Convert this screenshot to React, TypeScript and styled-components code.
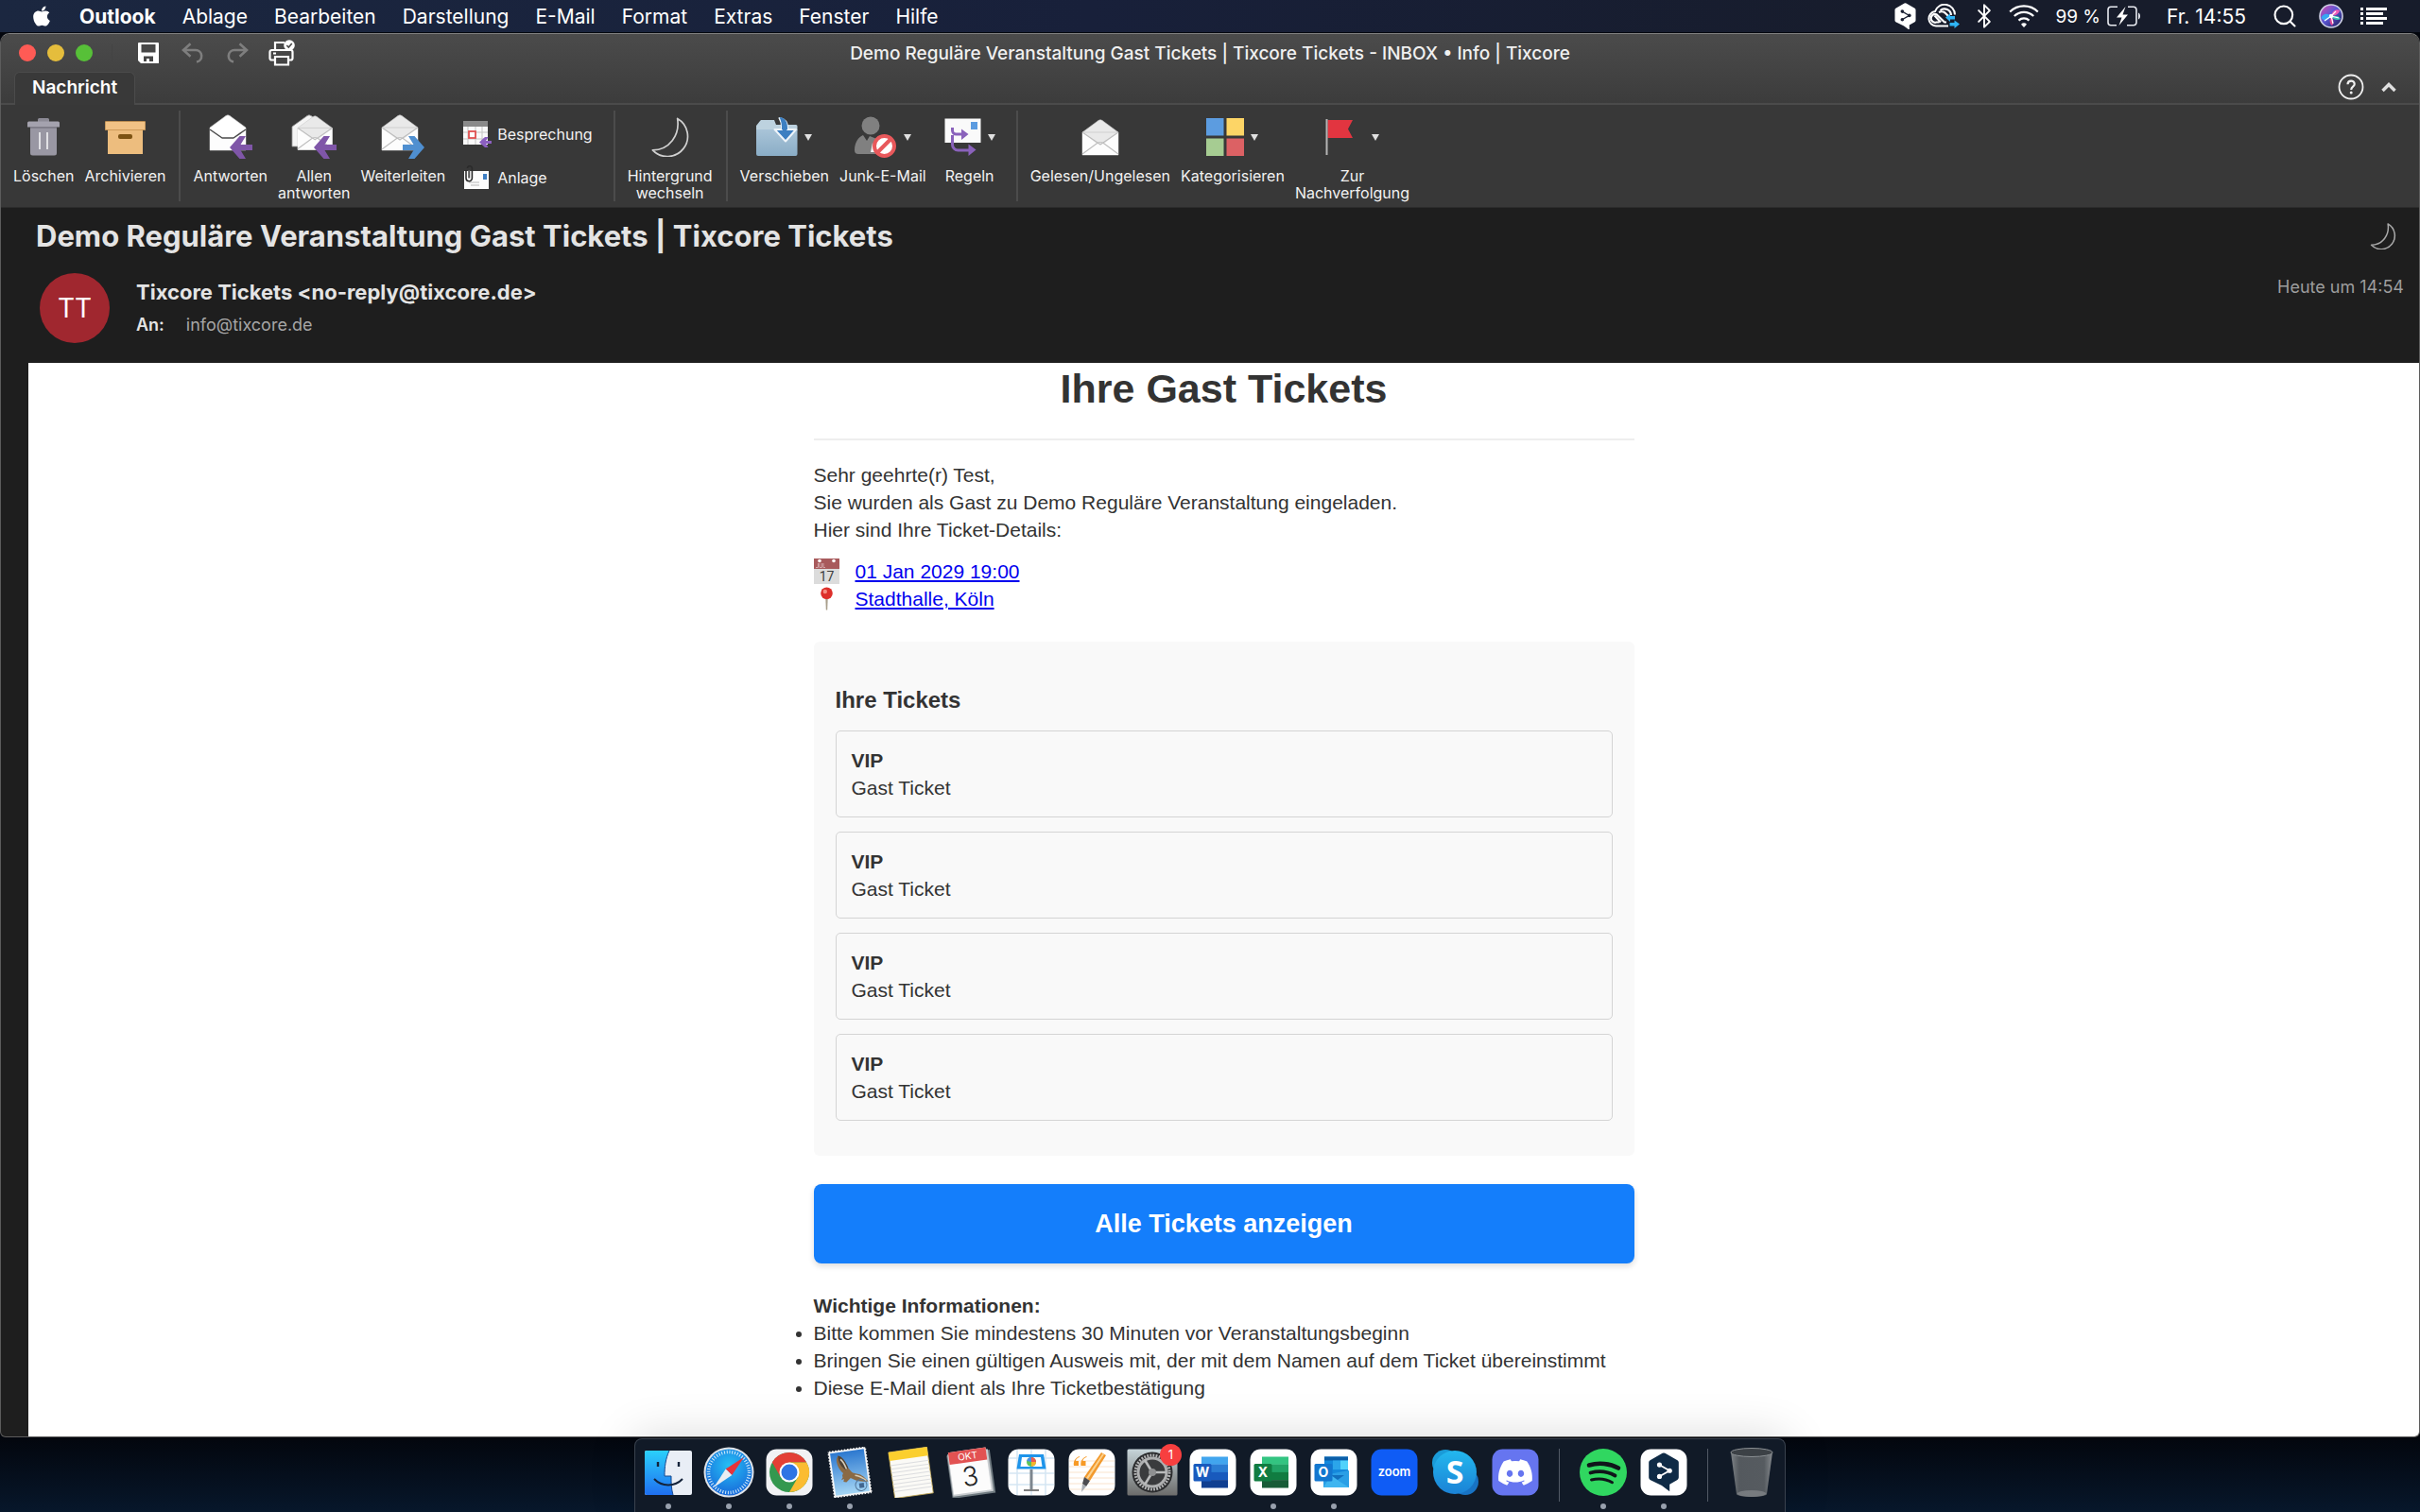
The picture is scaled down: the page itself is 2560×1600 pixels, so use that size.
import React from "react";
import styled, { createGlobalStyle, css } from "styled-components";
import { FaApple, FaDiscord } from "react-icons/fa";
import { Bluetooth, Search } from "lucide-react";

const ui = `Inter, "Liberation Sans", sans-serif`;
const mail = `"Liberation Sans", Arial, sans-serif`;

const GlobalStyle = createGlobalStyle`
  *, *::before, *::after { box-sizing: border-box; }
  body { margin: 0; background: #050d1b; font-family: ${ui}; }
  h1, h2, h3, p, ul { margin: 0; padding: 0; }
  svg { display: block; flex: none; }
`;

const plainButton = css`
  border: 0;
  padding: 0;
  background: none;
  color: inherit;
  font: inherit;
  cursor: default;
`;

const Desktop = styled.div`
  display: flex;
  flex-direction: column;
  height: 100vh;
  overflow: hidden;
  background: linear-gradient(#03060d 95%, #07172b 100%);
`;

/* ---------- Menu bar ---------- */

const MenuBar = styled.header`
  display: flex;
  align-items: center;
  justify-content: space-between;
  flex: none;
  height: 35px;
  padding: 0 35px 0 32px;
  border-bottom: 1px solid #05080f;
  background: linear-gradient(90deg, #1b2740, #18203a 45%, #171c2b 80%);
  color: #fff;
  font-size: 21px;
`;

const MenuList = styled.nav`
  display: flex;
  align-items: center;
  gap: 28px;
`;

const MenuItem = styled.button<{ $strong?: boolean }>`
  ${plainButton}
  font-weight: ${(p) => (p.$strong ? 700 : 400)};
`;

const StatusList = styled.div<{ $gap: number }>`
  display: flex;
  align-items: center;
  gap: ${(p) => p.$gap}px;
`;

const BatteryText = styled.span`
  font-size: 19px;
`;

/* ---------- Window ---------- */

const Window = styled.main`
  display: flex;
  flex-direction: column;
  flex: 1;
  min-height: 0;
  border: 1px solid #5c5c5c;
  border-top-color: #808080;
  border-radius: 10px 10px 6px 6px;
  overflow: hidden;
  background: #1e1e1e;
`;

const TitleArea = styled.div`
  flex: none;
  background: linear-gradient(#4b4b4b, #3c3c3c);
  border-bottom: 2px solid #4b4b4b;
`;

const TitleRow = styled.div`
  display: grid;
  grid-template-columns: 1fr auto 1fr;
  align-items: center;
  height: 40px;
  padding: 0 19px;
`;

const QuickAccess = styled.div`
  display: flex;
  align-items: center;
  gap: 19px;
`;

const Lights = styled.div`
  display: flex;
  gap: 12px;
  padding-right: 20px;
  border-right: 1px solid #434343;
  margin-right: 5px;
`;

const Light = styled.button<{ $color: string }>`
  ${plainButton}
  width: 18px;
  height: 18px;
  border-radius: 50%;
  background: ${(p) => p.$color};
`;

const ToolButton = styled.button`
  ${plainButton}
  display: flex;
  justify-content: center;
  width: 28px;
`;

const WindowTitle = styled.h1`
  color: #f0f0f0;
  font-size: 19px;
  font-weight: 500;
`;

const TabRow = styled.div`
  display: flex;
  justify-content: space-between;
  align-items: flex-end;
  height: 33px;
  padding: 0 24px 0 14px;
`;

const Tab = styled.button`
  ${plainButton}
  height: 35px;
  margin-bottom: -2px;
  padding: 0 18px 3px;
  border: 1px solid #4b4b4b;
  border-bottom: 0;
  border-radius: 6px 6px 0 0;
  background: #393939;
  color: #fff;
  font-size: 19px;
  font-weight: 600;
`;

const TabTools = styled.div`
  display: flex;
  align-items: center;
  gap: 18px;
  height: 34px;
`;

const IconButton = styled.button`
  ${plainButton}
  display: flex;
`;

/* ---------- Ribbon ---------- */

const Ribbon = styled.div`
  display: flex;
  flex: none;
  padding: 6px 0;
  border-bottom: 1px solid #2c2c2c;
  background: #383838;
  color: #f2f2f2;
  font-size: 16px;
  line-height: 18px;
`;

const Group = styled.div`
  display: flex;
  gap: 11px;
  height: 96px;
  padding: 0 14px 0 13px;
  border-right: 2px solid #4c4c4c;

  &:last-child {
    border-right: 0;
  }
`;

const RibbonButton = styled.button<{ $menu?: boolean }>`
  ${plainButton}
  display: flex;
  flex-direction: column;
  align-items: center;
  justify-content: flex-start;
  min-width: ${(p) => (p.$menu ? 70 : 64)}px;
`;

const RibbonIcon = styled.span`
  display: flex;
  align-items: center;
  gap: 7px;
  height: 56px;
  margin-bottom: 4px;
`;

const RibbonLabel = styled.span`
  white-space: pre-line;
  text-align: center;
`;

const SmallStack = styled.div`
  display: flex;
  flex-direction: column;
  padding: 2px 8px 0;
`;

const SmallButton = styled.button`
  ${plainButton}
  display: flex;
  align-items: center;
  gap: 6px;
  height: 46px;
`;

/* ---------- Message header ---------- */

const MessageHeader = styled.header`
  flex: none;
  padding: 10px 16px 21px 37px;
  color: #e4e4e4;
`;

const SubjectRow = styled.div`
  display: flex;
  justify-content: space-between;
  align-items: center;
  padding-right: 8px;
`;

const Subject = styled.h2`
  font-size: 31px;
  line-height: 40px;
  font-weight: 700;
`;

const SenderRow = styled.div`
  display: flex;
  gap: 28px;
  margin-top: 19px;
  padding-left: 4px;
`;

const Avatar = styled.div`
  display: flex;
  align-items: center;
  justify-content: center;
  width: 74px;
  height: 74px;
  border-radius: 50%;
  background: #a0272f;
  color: #fff;
  font-size: 28px;
`;

const SenderText = styled.div`
  display: flex;
  flex-direction: column;
  gap: 8px;
  flex: 1;
  padding-top: 5px;
`;

const Sender = styled.p`
  font-size: 22px;
  line-height: 30px;
  font-weight: 700;
`;

const Recipient = styled.p`
  display: flex;
  gap: 23px;
  color: #a6a6a6;
  font-size: 18px;
  line-height: 24px;

  strong {
    color: #e4e4e4;
    font-weight: 600;
  }
`;

const Received = styled.time`
  padding-top: 3px;
  color: #9d9d9d;
  font-size: 18px;
  line-height: 24px;
`;

/* ---------- Mail body ---------- */

const MailPane = styled.section`
  flex: 1;
  min-height: 0;
  overflow: hidden;
  margin-left: 29px;
  background: #fff;
  color: #333;
  font-family: ${mail};
  font-size: 21px;
  line-height: 29px;
`;

const MailContent = styled.article`
  display: flex;
  flex-direction: column;
  max-width: 868px;
  margin: 0 auto;
`;

const MailTitle = styled.h2`
  padding: 2px 0 28px;
  border-bottom: 2px solid #eee;
  font-size: 43px;
  line-height: 50px;
  text-align: center;
`;

const Intro = styled.p`
  margin-top: 22px;
`;

const Details = styled.div`
  margin: 15px 0 31px;
`;

const Detail = styled.div`
  display: flex;
  align-items: center;
  gap: 17px;

  a {
    color: #0000ee;
  }
`;

const TicketBox = styled.section`
  display: flex;
  flex-direction: column;
  gap: 15px;
  padding: 45px 23px 37px;
  border-radius: 6px;
  background: #f9f9f9;
`;

const TicketHeading = styled.h3`
  font-size: 24px;
  line-height: 34px;
`;

const Ticket = styled.div`
  padding: 16px;
  border: 1px solid #d4d4d4;
  border-radius: 5px;
`;

const ShowAll = styled.a`
  display: flex;
  align-items: center;
  justify-content: center;
  height: 84px;
  margin: 30px 0;
  border-radius: 8px;
  background: #147efb;
  box-shadow: 0 3px 6px rgba(0, 0, 0, 0.14);
  color: #fff;
  font-size: 27px;
  font-weight: 700;
  text-decoration: none;
`;

const Notes = styled.ul`
  list-style: disc;
`;

/* ---------- Dock ---------- */

const Dock = styled.footer`
  position: relative;
  z-index: 1;
  display: flex;
  align-self: center;
  flex: none;
  height: 78px;
  margin-top: 1px;
  padding: 0 3px;
  border: 1px solid #39414d;
  border-bottom: 0;
  border-radius: 8px 8px 0 0;
  background: #111a27;
  box-shadow: 0 0 50px rgba(0, 0, 0, 0.16);
`;

const DockItem = styled.button<{ $running?: boolean }>`
  ${plainButton}
  position: relative;
  display: flex;
  flex-direction: column;
  align-items: center;
  width: 64px;
  padding-top: 8px;

  &::after {
    content: "";
    width: 6px;
    height: 6px;
    margin-top: 6px;
    border-radius: 50%;
    background: ${(p) => (p.$running ? "#98a0ad" : "transparent")};
  }
`;

const DockDivider = styled.span`
  width: 1px;
  height: 56px;
  margin: 10px 14px 0;
  background: #525a66;
`;

const DockBadge = styled.span`
  position: absolute;
  top: 5px;
  right: 1px;
  width: 23px;
  height: 23px;
  border-radius: 50%;
  background: #f73f3f;
  color: #fff;
  font-size: 13px;
  line-height: 23px;
`;

/* ---------- Menu bar icons ---------- */

const DeeplMark = ({ size, body, line }: { size: number; body: string; line: string }) => (
  <svg width={size} height={(size * 30) / 24} viewBox="0 0 24 30">
    <path d="M11 .6a2 2 0 0 1 2 0l9.500 5.400a2 2 0 0 1 1 1.700v11.600a2 2 0 0 1-1 1.700L16.500 24.500V30L10.500 25.500 1.500 21a2 2 0 0 1-1-1.700V7.700A2 2 0 0 1 1.500 6z" fill={body} />
    <path d="M8.500 9.500 16.500 14 8.500 18.500" fill="none" stroke={line} strokeWidth="1.300" />
    <circle cx="8.700" cy="9.500" r="1.900" fill={line} />
    <circle cx="16.500" cy="14" r="1.900" fill={line} />
    <circle cx="8.700" cy="18.500" r="1.900" fill={line} />
  </svg>
);

const CloudSync = () => (
  <svg width="34" height="26" viewBox="0 0 34 26" fill="none">
    <path d="M22 23.500H9A7.800 7.800 0 0 1 8 8 10.800 10.800 0 0 1 29 11.500" stroke="#fff" strokeWidth="2" />
    <path d="M20 19.500h-2l-8.500-8.300A4.400 4.400 0 1 0 9.500 19.500h3M14 19.500 7.500 12.500M12 9a6.300 6.300 0 0 1 6.500.5l3.500 3.500M13.500 7a7 7 0 0 1 11.500 5" stroke="#fff" strokeWidth="2.200" />
    <path d="M19 14.500l5-4V13h5v3.500h-5V19zM34 21.500l-5.500-4V20h-5v3.500h5V26z" fill="#2fb4f5" />
  </svg>
);

const Wifi = () => (
  <svg width="32" height="26" viewBox="0 0 32 26" fill="none" stroke="#fff" strokeWidth="2.200">
    <path d="M1.200 8.500a21 21 0 0 1 29.600 0M5.800 13a14.500 14.500 0 0 1 20.400 0M10.500 17.600a8 8 0 0 1 11 0" />
    <path d="M16 25l-3-3.300a4.400 4.400 0 0 1 6 0z" fill="#fff" stroke="none" />
  </svg>
);

const Battery = () => (
  <svg width="36" height="22" viewBox="0 0 36 22" fill="none">
    <path d="M11 1.200H4a3 3 0 0 0-3 3v13.600a3 3 0 0 0 3 3h6M22 1.200h6a3 3 0 0 1 3 3v13.600a3 3 0 0 1-3 3h-7" stroke="#e8eaf0" strokeWidth="1.600" />
    <path d="M33 7.500c2.600.5 2.600 6.500 0 7z" fill="#e8eaf0" />
    <path d="M19.500 1 10 12.500h5.500L12.500 21 22 9.500h-5.500z" fill="#fff" />
  </svg>
);

const Siri = () => (
  <svg width="26" height="26" viewBox="0 0 26 26">
    <defs>
      <linearGradient id="siriBase" x1="0" y1="0" x2="1" y2="1">
        <stop offset="0" stopColor="#e24aa8" />
        <stop offset=".45" stopColor="#5d58d8" />
        <stop offset="1" stopColor="#1b1850" />
      </linearGradient>
    </defs>
    <circle cx="13" cy="13" r="12" fill="url(#siriBase)" stroke="#cfd2e6" strokeWidth="1.600" />
    <path d="M13 13C8 8 3 12 2.500 15c3 4 7 3 10.500-2z" fill="#37a7f2" />
    <path d="M13 13c1-6 6-8 9-6 0 3-5 6-9 6z" fill="#ef5cb8" />
    <path d="M13 13c5-1 9 0 10 3-3 2-8 1-10-3z" fill="#35c7b4" />
    <path d="M13 13c3 4 3 8 1 10-3-2-3-6-1-10z" fill="#e24a9a" />
    <path d="M6 18l7-5 5-5M13 13l8 2M13 13l2 8" stroke="#fff" strokeWidth="1.200" fill="none" />
    <circle cx="13" cy="13" r="2.200" fill="#fff" />
  </svg>
);

const ListIcon = () => (
  <svg width="28" height="18" viewBox="0 0 28 18" fill="#fff">
    <path d="M0 0h3v3H0zM0 5h3v3H0zM0 10h3v3H0zM0 15h3v3H0zM6 0h22v3H6zM6 5h18v3H6zM6 10h22v3H6zM6 15h18v3H6z" />
  </svg>
);

/* ---------- Toolbar icons ---------- */

const SaveIcon = () => (
  <svg width="22" height="22" viewBox="0 0 22 22">
    <path d="M0 1a1 1 0 0 1 1-1h20a1 1 0 0 1 1 1v21H3l-3-3z" fill="#fff" />
    <path d="M3.500 2h15v8.500h-15z" fill="#474747" />
    <path d="M6 14.500h10V20h-4v-3H9v3H6z" fill="#474747" />
  </svg>
);

const UndoIcon = ({ flip }: { flip?: boolean }) => (
  <svg width="24" height="22" viewBox="0 0 24 22" fill="none" stroke="#7e7e7e" strokeWidth="2.600">
    <g transform={flip ? "matrix(-1 0 0 1 24 0)" : undefined}>
      <path d="M9.500 1.200 2 8l7.500 6.800M2.500 8H15a6.300 6.300 0 0 1 1 12.500" />
    </g>
  </svg>
);

const PrintIcon = () => (
  <svg width="28" height="28" viewBox="0 0 28 28" fill="none" stroke="#fff" strokeWidth="2.200">
    <path d="M7 11V3h10M6 21.500H3.500a2 2 0 0 1-2-2V13a2 2 0 0 1 2-2h20a2 2 0 0 1 2 2v6.500a2 2 0 0 1-2 2H21" />
    <path d="M7 18h14v8.500H7z" />
    <circle cx="22" cy="6" r="5.800" fill="#fff" stroke="none" />
    <path d="m19.300 6 2 2 3.500-4" stroke="#474747" strokeWidth="1.600" />
    <path d="M5 14.500h3" />
  </svg>
);

const HelpIcon = () => (
  <svg width="28" height="28" viewBox="0 0 28 28" fill="none" stroke="#f0f0f0">
    <circle cx="14" cy="14" r="12.500" strokeWidth="1.800" />
    <path d="M10.500 11.200c0-4.800 7.200-4.600 7.200-.3 0 2.800-3.500 2.700-3.500 6" strokeWidth="2.200" />
    <circle cx="14.200" cy="20" r="1.500" fill="#f0f0f0" stroke="none" />
  </svg>
);

const ChevronUpIcon = () => (
  <svg width="16" height="11" viewBox="0 0 16 11" fill="none" stroke="#e0e0e0" strokeWidth="3.400">
    <path d="m1.500 9 6.500-6.500L14.500 9" />
  </svg>
);

const TrashIcon = () => (
  <svg width="34" height="40" viewBox="0 0 34 40">
    <path d="M11 4V1.500A1.500 1.500 0 0 1 12.500 0h9A1.500 1.500 0 0 1 23 1.500V4z" fill="#8d8b96" />
    <path d="M0 5a1.500 1.500 0 0 1 1.500-1.500h31A1.500 1.500 0 0 1 34 5v4.500H0z" fill="#a4a2ae" />
    <path d="M3 9.500h28V37a2.500 2.500 0 0 1-2.500 2.500h-23A2.500 2.500 0 0 1 3 37z" fill="#9997a3" />
    <path d="M3 9.500h28v1.200H3z" fill="#7b7985" />
    <path d="M13 15v18M21 15v18" stroke="#f4f4f6" strokeWidth="1.600" />
  </svg>
);

const ArchiveIcon = () => (
  <svg width="43" height="35" viewBox="0 0 43 35">
    <path d="M3 9h37v26H3z" fill="#edbd7e" />
    <path d="M1 .5h41a.8.8 0 0 1 .8.800V9.500H.2V1.300A.8.800 0 0 1 1 .5z" fill="#f1c285" stroke="#c5924f" strokeWidth=".8" />
    <rect x="14" y="14" width="15" height="5" rx="2" fill="#7d5313" />
  </svg>
);

const Envelope = ({ flat }: { flat?: boolean }) => (
  <g strokeLinejoin="round">
    <path d="M1 14 18 1.500a3.500 3.500 0 0 1 4 0L39 14v24H1z" fill={flat ? "#fff" : "#e9e9e9"} stroke="#c9c9c9" strokeWidth=".6" />
    <path d="m1 14 15 12h8l15-12v24H1z" fill="#fdfdfd" />
    <path d={flat ? "m1 16 13 9h12l13-9" : "m1 14 19 13 19-13M1 37l15-11a6 6 0 0 1 8 0l15 11"} fill="none" stroke={flat ? "#4a4a4a" : "#bdbdbd"} strokeWidth={flat ? 1.500 : 1.100} />
    {!flat && <path d="M1.500 14h37" stroke="#cfcfcf" strokeWidth="1" />}
  </g>
);

const purple = "#7f56a8";

const ReplyArrow = () => (
  <path d="M46 32v6H33.500l5.500 9h-6.500L22 35l10.500-12H39l-5.500 9z" fill={purple} />
);

const ReplyIcon = () => (
  <svg width="46" height="48" viewBox="0 0 46 48">
    <Envelope flat />
    <ReplyArrow />
  </svg>
);

const ReplyAllIcon = () => (
  <svg width="48" height="48" viewBox="-2 0 48 48">
    <path d="M-1 13 15 1.500a3.500 3.500 0 0 1 4 0L34 12v22H-1z" fill="#f4f4f4" stroke="#9a9a9a" strokeWidth=".8" />
    <g transform="translate(4 1) scale(.96)">
      <Envelope />
    </g>
    <ReplyArrow />
  </svg>
);

const ForwardIcon = () => (
  <svg width="46" height="48" viewBox="0 0 46 48">
    <Envelope />
    <path d="M23 32v6h11.500L29 47h6.500L46 35 35.500 23H29l5.500 9z" fill="#4f8fd0" />
  </svg>
);

const ReadIcon = () => (
  <svg width="40" height="39" viewBox="0 0 40 39">
    <Envelope />
  </svg>
);

const MeetingIcon = () => (
  <svg width="30" height="30" viewBox="0 0 30 30">
    <path d="M0 1h26v25H0z" fill="#fafafa" />
    <path d="M0 1h26v6H0z" fill="#8a8a8a" />
    <path d="M5 7v19M13 7v19M20 7v19M0 13h26M0 20h26" stroke="#c4c4c4" strokeWidth="1" />
    <rect x="6" y="12" width="7" height="7" fill="#fff" stroke="#e05252" strokeWidth="1.800" />
    <path d="M30 22v3h-6l2.500 4H23l-6-5.500L23 18h3.500L24 22z" fill="#8b5fc0" />
  </svg>
);

const AttachIcon = () => (
  <svg width="30" height="26" viewBox="0 0 30 26">
    <path d="M1 6h26v19H1z" fill="#fcfcfc" />
    <path d="M21 9h4v6h-4z" fill="#3f7fc4" />
    <path d="M6 18h11M8 21h9" stroke="#b5b5b5" strokeWidth="1.200" />
    <path d="M3 5v8.500a3.200 3.200 0 0 0 6.400 0V3.500a2.500 2.500 0 0 0-5-.500" fill="none" stroke="#2a2a2a" strokeWidth="1.600" />
    <path d="M6.200 5v8.500" stroke="#555" strokeWidth="2" />
  </svg>
);

const MoonIcon = ({ size, color }: { size: number; color: string }) => (
  <svg width={size} height={size} viewBox="0 0 42 44" fill="none" stroke={color} strokeWidth={size < 40 ? 2.4 : 1.8} strokeLinejoin="round">
    <path d="M29 1.500a22.500 22.500 0 1 1-27.500 35C20 36.500 32 20 29 1.500z" />
  </svg>
);

const MoveIcon = () => (
  <svg width="44" height="42" viewBox="0 0 44 42">
    <defs>
      <linearGradient id="folderBody" x1="0" y1="0" x2="0" y2="1">
        <stop offset="0" stopColor="#a9c4d8" />
        <stop offset="1" stopColor="#8aadc6" />
      </linearGradient>
    </defs>
    <path d="M0 9 4 4l1-1h14l2 5h21a1.500 1.500 0 0 1 1.500 1.500V14H0z" fill="#bdd2df" />
    <path d="M0 13h43.500v26a2 2 0 0 1-2 2h-39.500a2 2 0 0 1-2-2z" fill="url(#folderBody)" />
    <path d="M24.500 1c6 1 9 5 8.500 12h9L31 25.500 19.500 13H27c.3-5-.5-9-2.500-12z" fill="#3d7fc1" stroke="#eef4f9" strokeWidth="2" strokeLinejoin="round" />
    <path d="M24.500 0c6 .5 9 5 8.500 13h-6c.3-5-.5-9-2.500-13z" fill="#3d7fc1" />
  </svg>
);

const JunkIcon = () => (
  <svg width="45" height="45" viewBox="0 0 45 45">
    <circle cx="17" cy="10" r="9.500" fill="#808080" />
    <path d="M0 36c0-8 4-14 9-16l4 6 3-5 10 4v15H4a4 4 0 0 1-4-4z" fill="#808080" />
    <path d="m17 38 2-10 4 10z" fill="#f2f2f2" />
    <circle cx="31.500" cy="31.500" r="10.500" fill="#fff" stroke="#e8585b" strokeWidth="4" />
    <path d="m38 24.500-13.500 13.500" stroke="#e8585b" strokeWidth="4" />
  </svg>
);

const RulesIcon = () => (
  <svg width="39" height="40" viewBox="0 0 39 40" fill="none">
    <path d="M.5.500h38V26H.5z" fill="#fafafa" />
    <path d="M28 4h7v8h-7z" fill="#5c9ce0" />
    <path d="M8.500 10v3a4 4 0 0 0 4 4H20M8.500 18v10a6 6 0 0 0 6 6H27" stroke="#8a62bb" strokeWidth="3" />
    <path d="m18 11.500 7.500 5.500L18 23zM25.500 27.500l8 6-8 6.500z" fill="#8a62bb" />
  </svg>
);

const CategoryIcon = () => (
  <svg width="40" height="40" viewBox="0 0 40 40">
    <path d="M0 0h18.500v18.500H0z" fill="#5c9ce0" />
    <path d="M21.500 0H40v18.500H21.500z" fill="#fdd566" />
    <path d="M0 21.500h18.500V40H0z" fill="#a6cc92" />
    <path d="M21.500 21.500H40V40H21.500z" fill="#dc6164" />
  </svg>
);

const FlagIcon = () => (
  <svg width="42" height="38" viewBox="0 0 42 38">
    <path d="M2.500 1H29l-5 9.500 5 9.500H2.500z" fill="#e23540" />
    <path d="M1.500 0v38" stroke="#b4b4b4" strokeWidth="2" />
  </svg>
);

const Caret = () => (
  <svg width="8" height="7" viewBox="0 0 8 7">
    <path d="M0 0h8L4 7z" fill="#e0e0e0" />
  </svg>
);

/* ---------- Mail icons ---------- */

const CalendarEmoji = () => (
  <svg width="27" height="27" viewBox="0 0 27 27">
    <path d="M0 0h27v27H0z" fill="#dcdcdc" />
    <path d="M0 0h27v11H0z" fill="#a85a5c" />
    <circle cx="6" cy="2.500" r="1.800" fill="#fff" />
    <circle cx="21" cy="2.500" r="1.800" fill="#fff" />
    <path d="M2 9.500h2.500V5M6 5v4.500h2.500V5M10 5v4.500h2" fill="none" stroke="#d6aeb0" strokeWidth=".9" />
    <text x="13.500" y="24" textAnchor="middle" fontFamily="Roboto, sans-serif" fontSize="14" fill="#3c3c3c">17</text>
  </svg>
);

const PinEmoji = () => (
  <svg width="27" height="25" viewBox="0 0 27 25">
    <path d="M12.300 12h2.400l-.5 12.500h-1.400z" fill="#a99f8c" />
    <circle cx="13.500" cy="6.700" r="6.300" fill="#dd2f2a" />
    <circle cx="11.800" cy="5" r="2.200" fill="#f58d82" />
  </svg>
);

/* ---------- Dock icons ---------- */

const Frame = ({ children }: { children: React.ReactNode }) => (
  <svg width="54" height="54" viewBox="0 0 54 54">
    {children}
  </svg>
);

const Finder = () => (
  <Frame>
    <defs>
      <linearGradient id="finderLeft" x1="0" y1="0" x2="0" y2="1">
        <stop offset="0" stopColor="#2bd0fb" />
        <stop offset="1" stopColor="#1f6ff0" />
      </linearGradient>
    </defs>
    <rect x="2" y="4" width="50" height="47" rx="2" fill="#e9eef6" />
    <path d="M4 4h24c-4 9-5 17-5 27h7c0 7 0 13 2 20H4a2 2 0 0 1-2-2V6a2 2 0 0 1 2-2z" fill="url(#finderLeft)" />
    <path d="M28 4c-4 9-5 17-5 27h7c0 7 0 13 2 20" fill="none" stroke="#16498f" strokeWidth="1" />
    <path d="M16 16v5M38 16v5" stroke="#14233b" strokeWidth="2.400" />
    <path d="M12 34c8 8.500 22 8.500 30 0" fill="none" stroke="#14233b" strokeWidth="2" />
  </Frame>
);

const Safari = () => (
  <Frame>
    <defs>
      <radialGradient id="safariFace" cx=".5" cy=".35" r=".7">
        <stop offset="0" stopColor="#25c0f5" />
        <stop offset="1" stopColor="#1763d8" />
      </radialGradient>
    </defs>
    <circle cx="27" cy="27" r="26.500" fill="#dfe3e8" />
    <circle cx="27" cy="27" r="24.500" fill="url(#safariFace)" />
    <circle cx="27" cy="27" r="21.500" fill="none" stroke="#d5ecfb" strokeWidth="3.500" strokeDasharray="1 1.810" />
    <path d="m43 11-12.700 19-6.600-6.500z" fill="#e8333a" />
    <path d="m11 43 12.700-19.500 6.600 6.500z" fill="#e9edf1" />
  </Frame>
);

const Tile = ({ fill = "#fff" }: { fill?: string }) => <rect x="2.500" y="2.500" width="49" height="49" rx="11" fill={fill} />;

const Chrome = () => (
  <Frame>
    <Tile fill="#f1f2f4" />
    <circle cx="27" cy="27" r="21" fill="#34984f" />
    <path d="M8.800 16.500A21 21 0 0 1 45.200 16.500H27l-9.100 15.700z" fill="#e33f35" />
    <path d="M45.200 16.500A21 21 0 0 1 27 48l9.100-15.800L27 16.500z" fill="#fbbc31" />
    <circle cx="27" cy="27" r="10.500" fill="#fff" />
    <circle cx="27" cy="27" r="8.500" fill="#2f74e4" />
  </Frame>
);

const MailStamp = () => (
  <Frame>
    <defs>
      <linearGradient id="stampSky" x1="0" y1="0" x2="0" y2="1">
        <stop offset="0" stopColor="#2c78cf" />
        <stop offset="1" stopColor="#a5d6f5" />
      </linearGradient>
    </defs>
    <g transform="rotate(-8 27 27)">
      <rect x="6.500" y="2" width="41" height="50" fill="#f5f5f5" stroke="#111a27" strokeWidth="1.600" strokeDasharray="1.600 1.600" />
      <rect x="9" y="4.500" width="36" height="45" fill="url(#stampSky)" />
      <path d="M17 8c4 1 7 7 9 14 1 2 3 5 4 6l5 2c4 1 7 5 10 9-5 0-11-1-15-4l-3-2-5 4-3-1 1-3-3 1 2-3c-1-1 0-3 1-4-4-4-6-11-5-16z" fill="#8a6a45" />
      <path d="M17 8c4 1 7 7 9 14l-3 2c-4-4-7-9-6-16z" fill="#4c4136" />
      <path d="M19 12c3 3 4 7 5 11M32 31c5 1 8 4 11 7" stroke="#d8ccb5" strokeWidth="1.600" fill="none" />
      <circle cx="37" cy="42" r="6" fill="none" stroke="#54789c" strokeWidth="1" />
      <path d="M35 40h5v5h-5z" fill="#41668f" />
    </g>
  </Frame>
);

const NotesApp = () => (
  <Frame>
    <g transform="rotate(-8 27 27)">
      <rect x="7" y="3" width="41" height="49" fill="#fbfaf6" stroke="#c7ab54" strokeWidth=".8" />
      <rect x="7" y="3" width="41" height="9" fill="#fbcf2e" />
      <path d="M7 17h41M7 21h41M7 25h41M7 29h41M7 33h41M7 37h41M7 41h41M7 45h41" stroke="#dcdddf" strokeWidth="1" />
    </g>
  </Frame>
);

const CalendarApp = () => (
  <Frame>
    <g transform="rotate(-8 27 27)">
      <rect x="4" y="6" width="46" height="46" fill="#6f7a80" />
      <rect x="5" y="5" width="43" height="45" fill="#c9cdd0" />
      <rect x="6" y="3" width="40" height="45" fill="#fcfcfc" />
      <rect x="6" y="3" width="40" height="13" fill="#e25252" />
      <text x="26" y="13" textAnchor="middle" fontFamily="Inter, sans-serif" fontSize="10" fill="#fff">OKT</text>
      <text x="26" y="41" textAnchor="middle" fontFamily="Inter, sans-serif" fontSize="28" fontWeight="300" fill="#222">3</text>
    </g>
  </Frame>
);

const Keynote = () => (
  <Frame>
    <Tile />
    <path d="M12 3v48M27 3v48M42 3v48M3 12h48M3 28h48M3 40h48" stroke="#d5e6f3" strokeWidth="1.500" />
    <path d="M27 24v21" stroke="#7d868f" strokeWidth="3" />
    <path d="M19 46h16" stroke="#555" strokeWidth="1.500" />
    <path d="M14 8h26l2.500 15.500h-31z" fill="#1e94ea" />
    <path d="M17 11h20l1.500 10h-23z" fill="#fff" />
    <circle cx="27" cy="16" r="5" fill="#5cc45a" />
    <path d="M27 16v-5a5 5 0 0 1 5 5z" fill="#ee5a4e" />
    <path d="M27 16h5a5 5 0 0 1-5 5z" fill="#f7b42c" />
    <path d="M27 16v-5a5 5 0 0 0-4.800 4z" fill="#4a8fe8" />
  </Frame>
);

const Pages = () => (
  <Frame>
    <Tile />
    <path d="M3 15h48M3 21h48M3 27h48M3 33h48M3 39h48M3 45h48" stroke="#f9e3cc" strokeWidth="1" />
    <path d="M14 10c-5 2-7 6-6 10h5v-5h-3c0-2 2-3.500 4-4zM21.500 10c-5 2-7 6-6 10h5v-5h-3c0-2 2-3.500 4-4z" fill="#f79a26" />
    <path d="m37 6 5 3-17 27-6-4z" fill="#f29a2e" />
    <path d="m38.500 7 1.500 1-17 26-2-1z" fill="#fcd28e" />
    <path d="m19 32 6 4-4 6-4-3z" fill="#4c4c50" />
    <path d="m17 39 4 3-5 6z" fill="#a9adb3" />
  </Frame>
);

const Settings = () => (
  <Frame>
    <defs>
      <linearGradient id="settingsBack" x1="0" y1="0" x2="0" y2="1">
        <stop offset="0" stopColor="#c6d4d9" />
        <stop offset="1" stopColor="#6c6c6b" />
      </linearGradient>
    </defs>
    <rect x=".5" y="2.500" width="53" height="49" rx="1.500" fill="url(#settingsBack)" />
    <circle cx="27" cy="27" r="21.500" fill="#2c2d2f" />
    <circle cx="27" cy="27" r="18" fill="none" stroke="#b6b7b8" strokeWidth="3" strokeDasharray="1.800 1.340" />
    <circle cx="27" cy="27" r="15" fill="#3a3b3d" stroke="#aeafb0" strokeWidth="3" />
    <path d="M27 27 19 14M27 27h15M27 27l-8 13" stroke="#b9babb" strokeWidth="2.600" />
    <circle cx="27" cy="27" r="4" fill="#8f9091" />
  </Frame>
);

type OfficeProps = { letter: string; bands: string[]; badge: string };

const Office = ({ letter, bands, badge }: OfficeProps) => (
  <Frame>
    <Tile />
    {bands.map((c, i) => (
      <rect key={c} x="15" y={10.500 + i * 8.200} width="28" height="8.400" fill={c} />
    ))}
    <rect x="6.500" y="18" width="19" height="18.500" rx="1.500" fill={badge} />
    <text x="16" y="32" textAnchor="middle" fontFamily="Inter, sans-serif" fontSize="14" fontWeight="700" fill="#fff">{letter}</text>
  </Frame>
);

const OutlookApp = () => (
  <Frame>
    <Tile />
    <path d="M17 10.500h25v32H17z" fill="#1488dc" />
    <path d="M17 10.500h25v4H17z" fill="#0a5ea8" />
    <path d="M26 14.500h8V24h-8z" fill="#2ba5ea" />
    <path d="M34 14.500h8V24h-8z" fill="#50d2fb" />
    <path d="m16 30 27-5v18H16z" fill="#2a9fe6" />
    <path d="m24 30 8 6 11 7H16z" fill="#3fb5f0" />
    <path d="M24 30h14l-7 5z" fill="#1170bd" />
    <rect x="6.500" y="18" width="19" height="18.500" rx="1.500" fill="#1377cf" />
    <text x="16" y="32" textAnchor="middle" fontFamily="Inter, sans-serif" fontSize="14" fontWeight="700" fill="#fff">O</text>
  </Frame>
);

const Zoom = () => (
  <Frame>
    <Tile fill="#0f5cf5" />
    <text x="27" y="31" textAnchor="middle" fontFamily="Inter, sans-serif" fontSize="13" fontWeight="600" fill="#fff">zoom</text>
  </Frame>
);

const Skype = () => (
  <Frame>
    <defs>
      <linearGradient id="skypeFace" x1="0" y1="0" x2="0" y2="1">
        <stop offset="0" stopColor="#23b8ee" />
        <stop offset="1" stopColor="#1b82d6" />
      </linearGradient>
    </defs>
    <circle cx="17" cy="17" r="14" fill="#1a9bd8" />
    <circle cx="38" cy="37" r="14" fill="#1873c4" />
    <circle cx="27" cy="27" r="23" fill="url(#skypeFace)" />
    <text x="27" y="39" textAnchor="middle" fontFamily="Open Sans, sans-serif" fontSize="34" fontWeight="700" fill="#fff">S</text>
  </Frame>
);

const Discord = () => (
  <Frame>
    <Tile fill="#6675f0" />
    <g transform="translate(7.500 7.500)">
      <FaDiscord size={39} color="#fff" />
    </g>
  </Frame>
);

const Spotify = () => (
  <Frame>
    <circle cx="27" cy="27" r="25" fill="#30d760" />
    <g fill="none" stroke="#10151a" strokeLinecap="round">
      <path d="M12 19.500c10-3 22-2 31 3" strokeWidth="4.600" />
      <path d="M13.500 27.500c9-2.500 18-1.500 26 3" strokeWidth="3.800" />
      <path d="M14.500 35c8-2 15.500-1 22 2.800" strokeWidth="3" />
    </g>
  </Frame>
);

const Deepl = () => (
  <Frame>
    <Tile />
    <g transform="translate(10.500 6)">
      <DeeplMark size={33} body="#0f2b46" line="#fff" />
    </g>
  </Frame>
);

const Bin = () => (
  <Frame>
    <defs>
      <linearGradient id="binBody" x1="0" y1="0" x2="1" y2="0">
        <stop offset="0" stopColor="#7d8286" />
        <stop offset=".2" stopColor="#54595e" />
        <stop offset=".8" stopColor="#565b60" />
        <stop offset="1" stopColor="#85898d" />
      </linearGradient>
    </defs>
    <path d="M5 6h44l-6 44c-1 4-31 4-32 0z" fill="url(#binBody)" />
    <ellipse cx="27" cy="6" rx="22" ry="4.500" fill="#3c4146" stroke="#8b9094" strokeWidth="1" />
    <ellipse cx="27" cy="49.500" rx="15" ry="3.500" fill="#8d9194" opacity=".6" />
  </Frame>
);

/* ---------- Data ---------- */

const menus = ["Ablage", "Bearbeiten", "Darstellung", "E-Mail", "Format", "Extras", "Fenster", "Hilfe"];

type Command = { label: string; icon: React.ReactNode; menu?: boolean };

const deleteGroup: Command[] = [
  { label: "Löschen", icon: <TrashIcon /> },
  { label: "Archivieren", icon: <ArchiveIcon /> },
];
const replyGroup: Command[] = [
  { label: "Antworten", icon: <ReplyIcon /> },
  { label: "Allen\nantworten", icon: <ReplyAllIcon /> },
  { label: "Weiterleiten", icon: <ForwardIcon /> },
];
const viewGroup: Command[] = [
  { label: "Hintergrund\nwechseln", icon: <MoonIcon size={42} color="#d0d0d0" /> },
];
const moveGroup: Command[] = [
  { label: "Verschieben", icon: <MoveIcon />, menu: true },
  { label: "Junk-E-Mail", icon: <JunkIcon />, menu: true },
  { label: "Regeln", icon: <RulesIcon />, menu: true },
];
const tagGroup: Command[] = [
  { label: "Gelesen/Ungelesen", icon: <ReadIcon /> },
  { label: "Kategorisieren", icon: <CategoryIcon />, menu: true },
  { label: "Zur\nNachverfolgung", icon: <FlagIcon />, menu: true },
];

const tickets = [1, 2, 3, 4];

const notes = [
  "Bitte kommen Sie mindestens 30 Minuten vor Veranstaltungsbeginn",
  "Bringen Sie einen gültigen Ausweis mit, der mit dem Namen auf dem Ticket übereinstimmt",
  "Diese E-Mail dient als Ihre Ticketbestätigung",
];

type App = { name: string; icon: React.ReactNode; running?: boolean; badge?: string };

const apps: App[] = [
  { name: "Finder", icon: <Finder />, running: true },
  { name: "Safari", icon: <Safari />, running: true },
  { name: "Chrome", icon: <Chrome />, running: true },
  { name: "Mail", icon: <MailStamp />, running: true },
  { name: "Notizen", icon: <NotesApp /> },
  { name: "Kalender", icon: <CalendarApp /> },
  { name: "Keynote", icon: <Keynote /> },
  { name: "Pages", icon: <Pages /> },
  { name: "Systemeinstellungen", icon: <Settings />, badge: "1" },
  { name: "Word", icon: <Office letter="W" bands={["#41a5ee", "#2b7cd3", "#185abd", "#103f91"]} badge="#185abd" /> },
  { name: "Excel", icon: <Office letter="X" bands={["#33c481", "#21a366", "#107c41", "#185c37"]} badge="#107c41" />, running: true },
  { name: "Outlook", icon: <OutlookApp />, running: true },
  { name: "Zoom", icon: <Zoom /> },
  { name: "Skype", icon: <Skype /> },
  { name: "Discord", icon: <Discord /> },
];

const recentApps: App[] = [
  { name: "Spotify", icon: <Spotify />, running: true },
  { name: "DeepL", icon: <Deepl />, running: true },
];

const Commands = ({ items }: { items: Command[] }) => (
  <>
    {items.map((c) => (
      <RibbonButton key={c.label} $menu={c.menu}>
        <RibbonIcon>
          {c.icon}
          {c.menu && <Caret />}
        </RibbonIcon>
        <RibbonLabel>{c.label}</RibbonLabel>
      </RibbonButton>
    ))}
  </>
);

const DockApps = ({ items }: { items: App[] }) => (
  <>
    {items.map((a) => (
      <DockItem key={a.name} aria-label={a.name} $running={a.running}>
        {a.icon}
        {a.badge && <DockBadge>{a.badge}</DockBadge>}
      </DockItem>
    ))}
  </>
);

export default function App() {
  return (
    <Desktop>
      <GlobalStyle />
      <MenuBar>
        <MenuList>
          <FaApple size={24} />
          <MenuItem $strong>Outlook</MenuItem>
          {menus.map((m) => (
            <MenuItem key={m}>{m}</MenuItem>
          ))}
        </MenuList>
        <StatusList $gap={27}>
          <StatusList $gap={17}>
            <StatusList $gap={12}>
              <DeeplMark size={23} body="#fff" line="#1a2033" />
              <CloudSync />
              <Bluetooth size={28} strokeWidth={1.7} />
              <Wifi />
            </StatusList>
            <StatusList $gap={7}>
              <BatteryText>99 %</BatteryText>
              <Battery />
            </StatusList>
          </StatusList>
          <span>Fr. 14:55</span>
          <StatusList $gap={22}>
            <Search size={28} strokeWidth={1.8} />
            <StatusList $gap={18}>
              <Siri />
              <ListIcon />
            </StatusList>
          </StatusList>
        </StatusList>
      </MenuBar>

      <Window>
        <TitleArea>
          <TitleRow>
            <QuickAccess>
              <Lights>
                <Light $color="#ff5b55" aria-label="Schließen" />
                <Light $color="#e5bd3c" aria-label="Minimieren" />
                <Light $color="#57c038" aria-label="Vollbild" />
              </Lights>
              <ToolButton aria-label="Speichern"><SaveIcon /></ToolButton>
              <ToolButton aria-label="Widerrufen"><UndoIcon /></ToolButton>
              <ToolButton aria-label="Wiederholen"><UndoIcon flip /></ToolButton>
              <ToolButton aria-label="Drucken"><PrintIcon /></ToolButton>
            </QuickAccess>
            <WindowTitle>
              Demo Reguläre Veranstaltung Gast Tickets | Tixcore Tickets - INBOX • Info | Tixcore
            </WindowTitle>
          </TitleRow>
          <TabRow>
            <Tab>Nachricht</Tab>
            <TabTools>
              <IconButton aria-label="Hilfe"><HelpIcon /></IconButton>
              <IconButton aria-label="Menüband ausblenden"><ChevronUpIcon /></IconButton>
            </TabTools>
          </TabRow>
        </TitleArea>

        <Ribbon>
          <Group><Commands items={deleteGroup} /></Group>
          <Group>
            <Commands items={replyGroup} />
            <SmallStack>
              <SmallButton><MeetingIcon />Besprechung</SmallButton>
              <SmallButton><AttachIcon />Anlage</SmallButton>
            </SmallStack>
          </Group>
          <Group><Commands items={viewGroup} /></Group>
          <Group><Commands items={moveGroup} /></Group>
          <Group><Commands items={tagGroup} /></Group>
        </Ribbon>

        <MessageHeader>
          <SubjectRow>
            <Subject>Demo Reguläre Veranstaltung Gast Tickets | Tixcore Tickets</Subject>
            <IconButton aria-label="Hintergrund wechseln"><MoonIcon size={28} color="#a8a8a8" /></IconButton>
          </SubjectRow>
          <SenderRow>
            <Avatar>TT</Avatar>
            <SenderText>
              <Sender>Tixcore Tickets &lt;no-reply@tixcore.de&gt;</Sender>
              <Recipient><strong>An:</strong> <span>info@tixcore.de</span></Recipient>
            </SenderText>
            <Received>Heute um 14:54</Received>
          </SenderRow>
        </MessageHeader>

        <MailPane>
          <MailContent>
            <MailTitle>Ihre Gast Tickets</MailTitle>
            <Intro>
              Sehr geehrte(r) Test,<br />
              Sie wurden als Gast zu Demo Reguläre Veranstaltung eingeladen.<br />
              Hier sind Ihre Ticket-Details:
            </Intro>
            <Details>
              <Detail><CalendarEmoji /><a href="#termin">01 Jan 2029 19:00</a></Detail>
              <Detail><PinEmoji /><a href="#ort">Stadthalle, Köln</a></Detail>
            </Details>
            <TicketBox>
              <TicketHeading>Ihre Tickets</TicketHeading>
              {tickets.map((t) => (
                <Ticket key={t}>
                  <strong>VIP</strong>
                  <p>Gast Ticket</p>
                </Ticket>
              ))}
            </TicketBox>
            <ShowAll href="#tickets">Alle Tickets anzeigen</ShowAll>
            <strong>Wichtige Informationen:</strong>
            <Notes>
              {notes.map((n) => (
                <li key={n}>{n}</li>
              ))}
            </Notes>
          </MailContent>
        </MailPane>
      </Window>

      <Dock>
        <DockApps items={apps} />
        <DockDivider />
        <DockApps items={recentApps} />
        <DockDivider />
        <DockItem aria-label="Papierkorb"><Bin /></DockItem>
      </Dock>
    </Desktop>
  );
}
